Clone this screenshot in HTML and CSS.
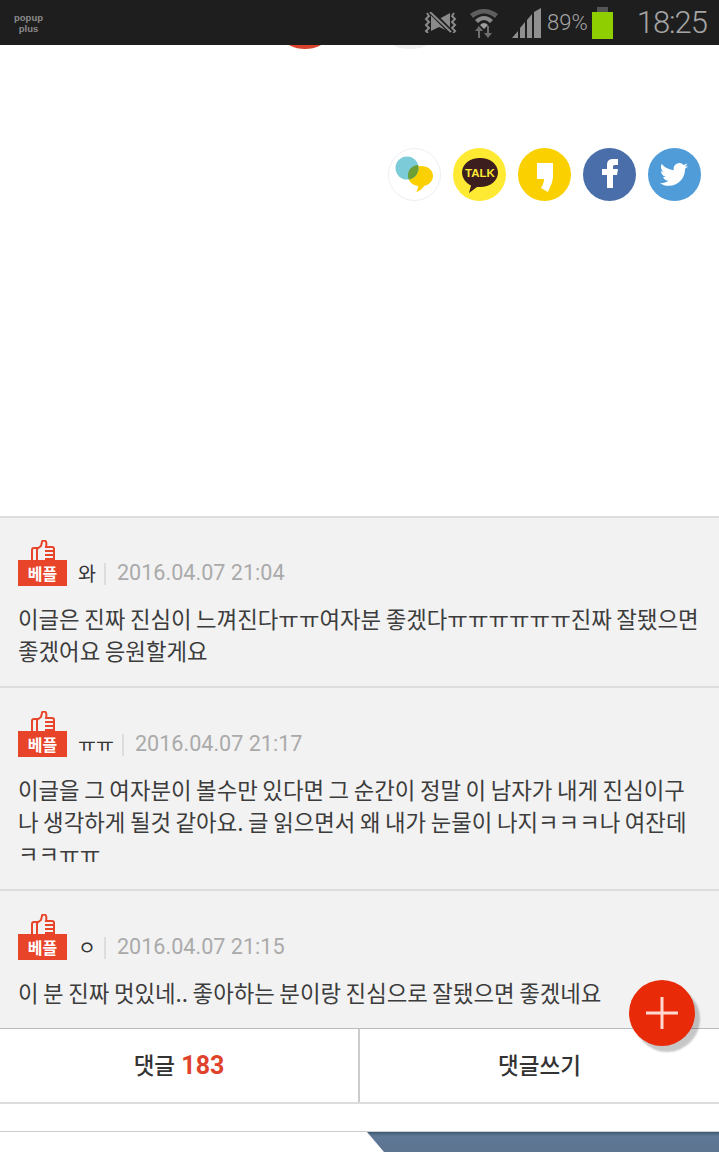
FILE: index.html
```html
<!DOCTYPE html>
<html lang="ko">
<head>
  <meta charset="UTF-8">
  <meta name="viewport" content="width=device-width, initial-scale=1.0">
  <title>댓글</title>
  <link rel="stylesheet" href="styles.css">
</head>
<body>

<div class="statusbar">
  <div class="popup-logo">popup<br>plus</div>
  <div class="status-right">
    <svg class="ic-mute" width="33" height="21" viewBox="0 0 33 21">
      <g fill="none" stroke="#8a8a8a" stroke-width="2">
        <path d="M3 1l2 3-3 3 3 3-3 3 3 3-3 3 2 2"/>
        <path d="M30 1l-2 3 3 3-3 3 3 3-3 3 3 3-2 2"/>
      </g>
      <path d="M7 3l8 4 11-6v19l-11-5-8 4z" fill="#8a8a8a"/>
      <path d="M6 -1l22 22" stroke="#1e1e1e" stroke-width="5"/>
      <path d="M6 0l21 20" stroke="#8a8a8a" stroke-width="2"/>
    </svg>
    <svg class="ic-wifi" width="30" height="31" viewBox="0 0 30 31">
      <path d="M1 7Q15-3 29 7l-3 4Q15 2 4 11z" fill="#5e5e5e"/>
      <path d="M6 13Q15 5 24 13l-3 3Q15 10 9 16z" fill="#8a8a8a"/>
      <path d="M11 18Q15 14 19 18l-4 4z" fill="#a0a0a0"/>
      <path d="M9 31v-7H6l4-5 4 5h-3v7zM20 19v7h3l-4 5-4-5h3v-7z" fill="#6e6e6e"/>
    </svg>
    <svg class="ic-signal" width="30" height="30" viewBox="0 0 30 30">
      <path d="M0 30l6-7v7zM8 30V20l5-6v16zM15 30V12l5-6v24zM22 30V4l7-4v30z" fill="#8f8f8f"/>
    </svg>
    <span class="battery-pct">89%</span>
    <div class="battery"><div class="battery-cap"></div><div class="battery-body"></div></div>
    <span class="clock">18:25</span>
  </div>
</div>

<div class="peek">
  <span class="peek-red"></span>
  <span class="peek-gray"></span>
</div>

<div class="share">
  <svg class="share-ic" viewBox="0 0 53 53">
    <circle cx="26.5" cy="26.5" r="26" fill="#fff" stroke="#eceef2"/>
    <path d="M33 18c7 0 12 4 12 10 0 5-4 9-9 10-1 2-4 5-8 6 1-1 2-3 2-6-6-1-10-5-10-10 0-6 6-10 13-10z" fill="#fad000"/>
    <circle cx="19" cy="20" r="11.500" fill="#7ccbd8"/>
    <path d="M30 17a11.500 11.500 0 0 1-9 14.500c-1-1-1-3-1-4 0-6 4-10 10-10.500z" fill="#6d9f36"/>
  </svg>
  <svg class="share-ic" viewBox="0 0 53 53">
    <circle cx="26.500" cy="26.500" r="26.500" fill="#fee933"/>
    <path d="M27 10c10 0 18 6 18 14.500S37 39 27 39h-3l-8 6 2-7.500C13 35 9 30 9 24.500 9 16 17 10 27 10z" fill="#3c1e1e"/>
    <text x="27" y="29" class="talk">TALK</text>
  </svg>
  <svg class="share-ic" viewBox="0 0 53 53">
    <circle cx="26.500" cy="26.500" r="26.500" fill="#fad000"/>
    <path d="M19 15h16v13c0 6-3 11-5 16l-7-4c2-3 3-6 3-9h-7z" fill="#fff"/>
  </svg>
  <svg class="share-ic" viewBox="0 0 53 53">
    <circle cx="26.500" cy="26.500" r="26.500" fill="#4a6ea9"/>
    <path d="M24 40V27h-5v-6h5v-4c0-4 2-6 6-6h5v6h-3c-2 0-2 1-2 2v2h5l-1 6h-4v13z" fill="#fff"/>
  </svg>
  <svg class="share-ic" viewBox="0 0 53 53">
    <circle cx="26.500" cy="26.500" r="26.500" fill="#4f9cd9"/>
    <path transform="translate(4.800 4.800) scale(.82)" d="M43 16c-1 .6-2.500 1-4 1 1.500-1 2.500-2.200 3-3.800-1.400.8-2.800 1.400-4.400 1.700a7 7 0 0 0-12 6.300C19.800 20.800 14.600 18 11 13.700c-2 3.300-1 7.300 2.200 9.400-1.100 0-2.200-.3-3.200-.8 0 3.400 2.400 6.300 5.700 7-1 .3-2.100.3-3.200.1 1 2.800 3.500 4.700 6.600 4.800-3 2.300-6.700 3.400-10.400 3 3.100 2 6.800 3.100 10.700 3.100 13 0 20.300-11 19.900-20.800 1.600-1 2.900-2.200 3.700-3.500z" fill="#fff"/>
  </svg>
</div>

<div class="comments">
  <div class="comment comment-first">
    <div class="comment-head">
      <div class="best">
        <svg class="thumb" width="24" height="20" viewBox="0 0 24 20">
          <path d="M1 20V10c0-1 .5-2 2-2h3v12" fill="none" stroke="#e8442a" stroke-width="2"/>
          <path d="M6 9l4-3 1-4c0-1 1-1.500 2-1.500 2 0 3 2 2 6.500h6c1 0 2 1 2 2v11" fill="none" stroke="#e8442a" stroke-width="2"/>
          <path d="M14 11h8M14 15h8M14 19h8" stroke="#e8442a" stroke-width="2"/>
        </svg>
        <div class="best-label">베플</div>
      </div>
      <span class="nick">와</span>
      <span class="sep"></span>
      <span class="date">2016.04.07 21:04</span>
    </div>
    <p class="comment-text">이글은 진짜 진심이 느껴진다ㅠㅠ여자분 좋겠다ㅠㅠㅠㅠㅠㅠ진짜 잘됐으면 좋겠어요 응원할게요</p>
  </div>
  <div class="comment">
    <div class="comment-head">
      <div class="best">
        <svg class="thumb" width="24" height="20" viewBox="0 0 24 20">
          <path d="M1 20V10c0-1 .5-2 2-2h3v12" fill="none" stroke="#e8442a" stroke-width="2"/>
          <path d="M6 9l4-3 1-4c0-1 1-1.500 2-1.500 2 0 3 2 2 6.500h6c1 0 2 1 2 2v11" fill="none" stroke="#e8442a" stroke-width="2"/>
          <path d="M14 11h8M14 15h8M14 19h8" stroke="#e8442a" stroke-width="2"/>
        </svg>
        <div class="best-label">베플</div>
      </div>
      <span class="nick">ㅠㅠ</span>
      <span class="sep"></span>
      <span class="date">2016.04.07 21:17</span>
    </div>
    <p class="comment-text">이글을 그 여자분이 볼수만 있다면 그 순간이 정말 이 남자가 내게 진심이구나 생각하게 될것 같아요. 글 읽으면서 왜 내가 눈물이 나지ㅋㅋㅋ나 여잔데ㅋㅋㅠㅠ</p>
  </div>
  <div class="comment">
    <div class="comment-head">
      <div class="best">
        <svg class="thumb" width="24" height="20" viewBox="0 0 24 20">
          <path d="M1 20V10c0-1 .5-2 2-2h3v12" fill="none" stroke="#e8442a" stroke-width="2"/>
          <path d="M6 9l4-3 1-4c0-1 1-1.500 2-1.500 2 0 3 2 2 6.500h6c1 0 2 1 2 2v11" fill="none" stroke="#e8442a" stroke-width="2"/>
          <path d="M14 11h8M14 15h8M14 19h8" stroke="#e8442a" stroke-width="2"/>
        </svg>
        <div class="best-label">베플</div>
      </div>
      <span class="nick">ㅇ</span>
      <span class="sep"></span>
      <span class="date">2016.04.07 21:15</span>
    </div>
    <p class="comment-text">이 분 진짜 멋있네.. 좋아하는 분이랑 진심으로 잘됐으면 좋겠네요</p>
  </div>
</div>

<div class="tabs">
  <div class="tab tab-left">댓글 <b class="count">183</b></div>
  <div class="tab">댓글쓰기</div>
</div>

<div class="gap-row"></div>

<div class="banner-row">
  <div class="banner"></div>
</div>

<div class="fab">
  <svg width="34" height="34" viewBox="0 0 34 34">
    <path d="M17 1v32M1 17h32" stroke="#ffd9d0" stroke-width="3"/>
  </svg>
</div>

</body>
</html>
```

FILE: styles.css
```css
html, body {
  margin: 0;
  padding: 0;
}
body {
  position: relative;
  width: 719px;
  height: 1152px;
  overflow: hidden;
  background-color: #fff;
  font-family: "Noto Sans CJK KR", "Noto Sans", sans-serif;
  color: #333;
}
.statusbar {
  display: flex;
  justify-content: space-between;
  align-items: center;
  height: 45px;
  background-color: #1e1e1e;
}
.popup-logo {
  margin-left: 14px;
  font-family: "Liberation Sans", sans-serif;
  font-size: 9.5px;
  font-weight: 700;
  line-height: 11px;
  text-align: center;
  color: #8a8a8a;
}
.status-right {
  display: flex;
  align-items: center;
  margin-right: 12px;
}
.ic-mute {
  margin-right: 12px;
}
.ic-wifi {
  margin-right: 13px;
}
.ic-signal {
  margin-right: 5px;
  margin-top: 1px;
}
.battery-pct {
  font-family: "Roboto", sans-serif;
  font-size: 22px;
  font-weight: 300;
  color: #a5a5a5;
}
.battery {
  width: 21px;
  margin-left: 4px;
}
.battery-cap {
  width: 11px;
  height: 5px;
  margin: 0 auto;
  background-color: #555;
}
.battery-body {
  height: 27px;
  background-color: #8fce00;
}
.clock {
  margin-left: 24px;
  font-family: "Roboto", sans-serif;
  font-size: 31px;
  font-weight: 300;
  letter-spacing: -1px;
  color: #a5a5a5;
}
.peek {
  display: flex;
  height: 4px;
  padding-left: 285px;
  overflow: hidden;
}
.peek-red {
  width: 40px;
  height: 20px;
  margin-top: -16px;
  border-radius: 50%;
  background-color: #d9432b;
}
.peek-gray {
  width: 44px;
  height: 20px;
  margin-top: -16px;
  margin-left: 63px;
  border-radius: 50%;
  background-color: #f0f0f0;
}
.share {
  display: flex;
  justify-content: flex-end;
  gap: 12px;
  height: 467px;
  box-sizing: border-box;
  padding: 99px 18px 0 0;
}
.share-ic {
  width: 53px;
  height: 53px;
}
.talk {
  font-family: "Liberation Sans", sans-serif;
  font-size: 11.5px;
  font-weight: 700;
  text-anchor: middle;
  fill: #fee933;
}
.comments {
  height: 510px;
  overflow: hidden;
  background-color: #f2f2f2;
  border-top: 2px solid #ddd;
  border-bottom: 1px solid #bbb;
}
.comment {
  height: 178px;
  padding: 23px 18px 0;
  border-top: 2px solid #ddd;
}
.comment-first {
  height: 146px;
  padding-top: 22px;
  border-top: none;
}
.comment-head {
  display: flex;
  align-items: flex-end;
  height: 46px;
}
.best {
  width: 49px;
}
.thumb {
  display: block;
  margin-left: 13px;
}
.best-label {
  height: 26px;
  line-height: 26px;
  background-color: #e8442a;
  color: #fff;
  text-align: center;
  font-size: 16px;
  font-weight: 700;
}
.nick {
  margin-left: 11px;
  font-size: 19.5px;
  line-height: 26px;
  color: #333;
}
.sep {
  width: 2px;
  height: 22px;
  margin: 0 11px 1px 8px;
  background-color: #ddd;
}
.date {
  font-family: "Roboto", sans-serif;
  font-size: 21.6px;
  line-height: 26px;
  color: #aaa;
}
.comment-text {
  margin: 16px 0 0;
  font-size: 22.35px;
  line-height: 32px;
  word-spacing: -1.7px;
  color: #3c3c3c;
}
.tabs {
  display: flex;
  height: 73px;
  border-bottom: 2px solid #ddd;
}
.tab {
  flex: 1;
  text-align: center;
  font-size: 22.5px;
  line-height: 71px;
  font-weight: 500;
  color: #333;
}
.tab-left {
  flex: 0 0 358px;
  border-right: 2px solid #ccc;
}
.count {
  font-family: "Roboto", sans-serif;
  font-size: 25px;
  font-weight: 700;
  color: #e0432b;
}
.gap-row {
  height: 27px;
}
.banner-row {
  height: 20px;
  border-top: 1px solid #ccc;
  overflow: hidden;
}
.banner {
  height: 20px;
  margin-left: 367px;
  background: linear-gradient(#3f5873 0, #5e7896 4px, #5e7490 100%);
  clip-path: polygon(0 0, 100% 0, 100% 100%, 17px 100%);
}
.fab {
  position: absolute;
  left: 629px;
  top: 980px;
  display: flex;
  align-items: center;
  justify-content: center;
  width: 66px;
  height: 66px;
  border-radius: 50%;
  background-color: #e82a08;
  box-shadow: 5px 6px 2px rgba(0, 0, 0, 0.22);
}
```
